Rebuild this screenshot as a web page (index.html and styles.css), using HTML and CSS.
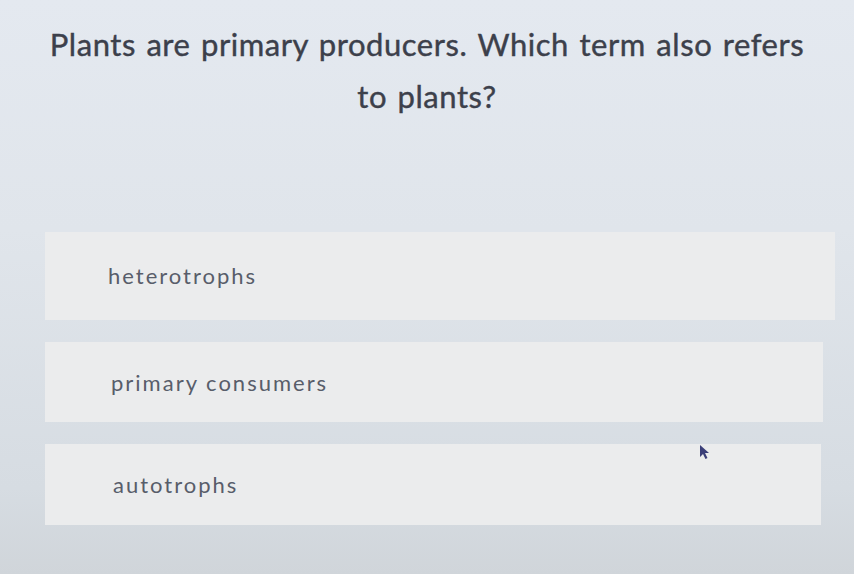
FILE: index.html
```html
<!DOCTYPE html>
<html>
<head>
<meta charset="utf-8">
<link rel="stylesheet" href="styles.css">
</head>
<body>
<div class="screen">
  <div class="question">
    <p class="q-text">Plants are primary producers. Which term also refers<br>to plants?</p>
  </div>
  <div class="options">
    <div class="option opt1"><span>heterotrophs</span></div>
    <div class="option opt2"><span>primary consumers</span></div>
    <div class="option opt3"><span>autotrophs</span></div>
  </div>
  <svg class="cursor" width="12" height="16" viewBox="0 0 12 16"><path d="M1 1 L1 13 L4 10 L6.5 15 L8.5 14 L6 9 L10 9 Z" fill="#3b3f78"/></svg>
</div>
</body>
</html>
```

FILE: styles.css
```css
html, body {
  margin: 0;
  padding: 0;
}
body {
  width: 854px;
  height: 574px;
  overflow: hidden;
  background: #dde2e8;
  font-family: Lato, "Open Sans", sans-serif;
}
.screen {
  position: relative;
  width: 854px;
  height: 574px;
  background: linear-gradient(180deg, #e4e9f0 0%, #e0e5eb 40%, #d6dce2 85%, #d0d5da 100%);
  display: flex;
  flex-direction: column;
}
.question {
  height: 232px;
  display: flex;
  justify-content: center;
}
.q-text {
  margin: 18px 0 0;
  text-align: center;
  font-size: 31px;
  line-height: 52px;
  color: #3c404b;
  font-weight: 400;
  letter-spacing: 0.55px;
  word-spacing: 2px;
  -webkit-text-stroke: 0.4px #3c404b;
}
.options {
  display: flex;
  flex-direction: column;
  gap: 22px;
  padding: 0 19px 0 45px;
}
.option {
  background: #ebeced;
  display: flex;
  align-items: center;
  padding-left: 63px;
  font-size: 22px;
  color: #585d6a;
  letter-spacing: 2px;
}
.opt1 { height: 86px; padding-bottom: 2px; }
.opt2 { height: 80px; padding-left: 66px; margin-right: 12px; }
.opt3 { height: 81px; padding-left: 68px; margin-right: 14px; }
.cursor {
  position: absolute;
  left: 699px;
  top: 444px;
}
```
